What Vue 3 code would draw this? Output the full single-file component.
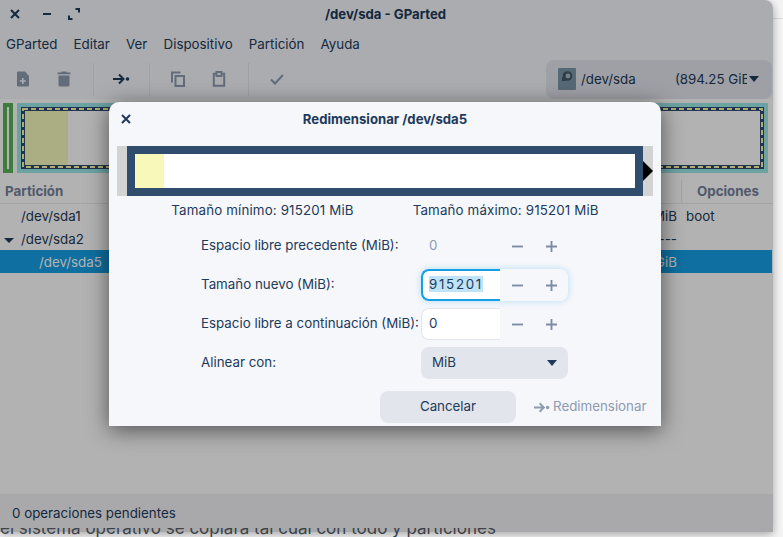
<template>
  <div class="page">
    <i class="page-rule"></i>

    <div class="window">
      <header class="titlebar">
        <div class="wm-buttons">
          <svg class="ic" viewBox="0 0 16 16"><path d="M4 4l8 8M12 4l-8 8" class="st-bold" /></svg>
          <svg class="ic" viewBox="0 0 16 16"><path d="M4 8h8" class="st-bold" /></svg>
          <svg class="ic" viewBox="0 0 16 16"><path d="M3 9.5V13h3.5M9.5 3H13v3.5" class="st-bold" /></svg>
        </div>
        <span class="title">/dev/sda - GParted</span>
      </header>

      <nav class="menubar">
        <span v-for="m in menus" :key="m">{{ m }}</span>
      </nav>

      <div class="toolbar">
        <div class="tools">
          <svg class="tool" viewBox="0 0 16 16"><path fill-rule="evenodd" class="fill-off" d="M3 0.5h7l4 4.5v9.5a1 1 0 0 1-1 1H3a1 1 0 0 1-1-1V1.5a1 1 0 0 1 1-1zM7 7v2.2H4.8v1.6H7V13h1.6v-2.2h2.2V9.200H8.600V7z" /></svg>
          <svg class="tool" viewBox="0 0 16 16"><path class="fill-off" d="M5.500 0.500h5l.5 1h3.500v1.800H1.500V1.500H5zM2.500 4.500h11v9.500a1.500 1.500 0 0 1-1.500 1.500H4a1.500 1.500 0 0 1-1.500-1.500z" /></svg>
          <i class="sep"></i>
          <svg class="tool arrow" viewBox="0 0 18 16"><path class="st-dark" d="M1 8h10.500M7 3.500L11.500 8 7 12.500" /><circle cx="15.500" cy="8" r="1.800" class="dot" /></svg>
          <i class="sep"></i>
          <svg class="tool" viewBox="0 0 16 16"><path class="st-off" d="M2 11.500V1.500h8.500M5.500 5h8.500v10H5.500z" /></svg>
          <svg class="tool" viewBox="0 0 16 16"><path class="st-off" d="M5.500 2.800H2.800v12h10.400v-12h-2.700M5.500 1h5V5h-5z" /></svg>
          <i class="sep"></i>
          <svg class="tool" viewBox="0 0 16 16"><path class="st-off" d="M2 8.500L6 12.500l8-8.500" /></svg>
        </div>
        <div class="device">
          <svg class="disk" viewBox="0 0 18 22"><rect width="18" height="22" rx="1" fill="#7b97a9" /><circle cx="9.500" cy="8" r="4.800" fill="#44586a" /><circle cx="10" cy="8" r="2.400" fill="#a9b6c0" /><path d="M4 9h4v4H4z" fill="#44586a" /></svg>
          <span class="dev-name">/dev/sda</span>
          <span class="dev-size"><span>(894.25 GiB)</span></span>
          <i class="caret"></i>
        </div>
      </div>

      <div class="map">
        <svg width="773" height="70" viewBox="0 0 773 70">
          <rect x="5" y="2" width="6" height="66" fill="none" stroke="#57b357" stroke-width="4" />
          <rect x="17" y="0" width="751" height="70" fill="#9ce8e8" />
          <rect x="21" y="4" width="743" height="62" fill="#2d4a70" />
          <rect x="25" y="8" width="735" height="54" fill="#fff" />
          <rect x="25" y="8" width="43" height="54" fill="#f5f8bb" />
          <rect x="23" y="6" width="739" height="58" fill="none" stroke="#fbf6a8" stroke-width="2" stroke-dasharray="5 3" />
        </svg>
      </div>

      <div class="table">
        <div class="row head">
          <span class="cell name">Partición</span>
          <span class="cell flags">Opciones</span>
        </div>
        <div v-for="p in partitions" :key="p.name" class="row" :class="{ selected: p.selected }">
          <span class="cell name" :style="{ paddingLeft: p.indent + 'px' }">
            <i v-if="p.open" class="tree-caret"></i>{{ p.name }}
          </span>
          <span class="cell used">{{ p.used }}</span>
          <span class="cell flags">{{ p.flags }}</span>
        </div>
      </div>

      <footer class="status">0 operaciones pendientes</footer>

      <div class="scrim"></div>
    </div>

    <p class="behind"><span>el sistema operativo se copiará tal cual con todo y particiones</span></p>

    <section class="dialog">
      <header class="dlg-title">
        <svg class="ic dlg-close" viewBox="0 0 16 16"><path d="M4 4l8 8M12 4l-8 8" class="st-bold" /></svg>
        <span class="title">Redimensionar /dev/sda5</span>
      </header>

      <div class="slider">
        <div class="frame">
          <div class="used-part"></div>
        </div>
        <i class="handle"></i>
      </div>

      <div class="limits">
        <span>Tamaño mínimo: 915201 MiB</span>
        <span>Tamaño máximo: 915201 MiB</span>
      </div>

      <div class="form">
        <label>Espacio libre precedente (MiB):</label>
        <div class="spin off">
          <span class="entry">0</span>
          <span class="spin-btn"><svg viewBox="0 0 12 12"><path d="M0 6h12" /></svg></span>
          <span class="spin-btn"><svg viewBox="0 0 12 12"><path d="M0 6h12M6 0v12" /></svg></span>
        </div>

        <label>Tamaño nuevo (MiB):</label>
        <div class="spin focus">
          <span class="entry"><mark>915201</mark></span>
          <span class="spin-btn"><svg viewBox="0 0 12 12"><path d="M0 6h12" /></svg></span>
          <span class="spin-btn"><svg viewBox="0 0 12 12"><path d="M0 6h12M6 0v12" /></svg></span>
        </div>

        <label>Espacio libre a continuación (MiB):</label>
        <div class="spin">
          <span class="entry">0</span>
          <span class="spin-btn"><svg viewBox="0 0 12 12"><path d="M0 6h12" /></svg></span>
          <span class="spin-btn"><svg viewBox="0 0 12 12"><path d="M0 6h12M6 0v12" /></svg></span>
        </div>

        <label>Alinear con:</label>
        <div class="combo"><span class="combo-text">MiB</span><i class="caret"></i></div>
      </div>

      <div class="actions">
        <button class="btn">Cancelar</button>
        <button class="btn-off">
          <svg viewBox="0 0 18 16"><path d="M1 8h10.500M7 3.500L11.500 8 7 12.500" /><circle cx="15.500" cy="8" r="1.800" /></svg>
          Redimensionar
        </button>
      </div>
    </section>
  </div>
</template>

<script setup>
const menus = ['GParted', 'Editar', 'Ver', 'Dispositivo', 'Partición', 'Ayuda']

const partitions = [
  { name: '/dev/sda1', indent: 21, used: 'MiB', flags: 'boot' },
  { name: '/dev/sda2', indent: 4, open: true, used: '----', flags: '' },
  { name: '/dev/sda5', indent: 39, used: 'GiB', flags: '', selected: true }
]
</script>

<style>
body {
  margin: 0;
}
</style>

<style scoped>
.page {
  position: relative;
  width: 783px;
  height: 537px;
  overflow: hidden;
  background: #f5f5f5;
  font-family: Inter, "Noto Sans", sans-serif;
  font-size: 13.33px;
  color: #1e3a5a;
}

.page-rule {
  position: absolute;
  left: 773px;
  right: 0;
  top: 18px;
  height: 1px;
  background: #dcdcdc;
}

.behind {
  position: absolute;
  left: 0;
  top: 528px;
  height: 9px;
  margin: 0;
  overflow: hidden;
  font-size: 17px;
  line-height: 20px;
  color: #3c4248;
  white-space: nowrap;
}

.behind span {
  display: block;
  margin-top: -10px;
}

.window {
  position: relative;
  width: 773px;
  height: 532px;
  display: flex;
  flex-direction: column;
  background: #fff;
  border-top-right-radius: 8px;
  box-shadow: 0 2px 10px rgba(0, 0, 0, 0.35);
  overflow: hidden;
}

.scrim {
  position: absolute;
  inset: 0;
  background: rgba(0, 0, 0, 0.3);
}

.titlebar {
  position: relative;
  height: 27px;
  padding: 0 2px 1px 0;
  display: flex;
  align-items: center;
  justify-content: center;
  background: #f5f7fb;
}

.wm-buttons {
  position: absolute;
  left: 7px;
  top: 6px;
  display: flex;
  gap: 16px;
}

.ic {
  width: 16px;
  height: 16px;
}

.wm-buttons .ic:last-child {
  margin-left: -5px;
}

.st-bold {
  fill: none;
  stroke: #1e3a5a;
  stroke-width: 2;
}

.title {
  font-size: 13.15px;
  font-weight: 700;
  color: #1e3a5a;
}

.menubar {
  height: 31px;
  padding-left: 6px;
  display: flex;
  align-items: center;
  gap: 16.2px;
  background: #f5f7fb;
}

.toolbar {
  height: 40px;
  display: flex;
  align-items: center;
  justify-content: space-between;
  padding-right: 1px;
  background: #f5f7fb;
}

.tools {
  display: flex;
  align-items: center;
  margin-left: 2.5px;
}

.tool {
  width: 16px;
  height: 16px;
  margin: 0 12.5px;
}

.tool.arrow {
  width: 18px;
  margin: 0 10.5px;
}

.fill-off {
  fill: #8e9bb0;
}

.st-off {
  fill: none;
  stroke: #8e9bb0;
  stroke-width: 2;
}

.st-dark {
  fill: none;
  stroke: #1e3a5a;
  stroke-width: 2;
}

.dot {
  fill: #1e3a5a;
}

.sep {
  width: 1px;
  height: 33px;
  margin: 0 8px;
  background: #e2e5ec;
}

.device {
  width: 226px;
  height: 39px;
  box-sizing: border-box;
  padding: 0 11px 0 12px;
  display: flex;
  align-items: center;
  border-radius: 8px;
  background: #e2e5ec;
}

.disk {
  width: 18px;
  height: 22px;
  margin-right: 5px;
}

.dev-name {
  width: 94px;
}

.dev-size {
  width: 72px;
  overflow: hidden;
  white-space: nowrap;
}

.caret {
  width: 0;
  height: 0;
  margin-left: 2px;
  border-left: 5.5px solid transparent;
  border-right: 5.5px solid transparent;
  border-top: 6px solid #1e3a5a;
}

.map {
  height: 70px;
  margin-top: 4px;
  background: #fff;
}

.map svg {
  display: block;
}

.table {
  flex: 1;
  margin-top: 7px;
  background: #fff;
}

.row {
  height: 23px;
  display: flex;
  align-items: center;
}

.row.head {
  height: 24px;
  box-sizing: border-box;
  padding-bottom: 2px;
  font-weight: 700;
  color: #75819a;
  border-bottom: 1px solid #ebebeb;
}

.row.head .flags {
  height: 24px;
  margin-bottom: -2px;
  display: flex;
  align-items: center;
  padding: 0 0 2px 15px;
  border-left: 1px solid #ebebeb;
}

.row.head .name {
  flex: 1;
  padding-left: 5px;
}

.row:not(.head) .name {
  flex: 1;
}

.row:not(.head) .flags {
  padding-left: 5px;
}

.row.selected {
  background: #159fe6;
  color: #fff;
  margin-right: 1px;
}

.row.selected .flags {
  width: 91px;
}

.used {
  margin-right: 4px;
}

.flags {
  width: 92px;
  box-sizing: border-box;
}

.tree-caret {
  display: inline-block;
  width: 0;
  height: 0;
  margin-right: 7px;
  vertical-align: 1px;
  border-left: 5px solid transparent;
  border-right: 5px solid transparent;
  border-top: 5px solid #1e3a5a;
}

.status {
  height: 38px;
  display: flex;
  align-items: center;
  padding-left: 12px;
  background: #f2f3f6;
}

.dialog {
  position: absolute;
  left: 109px;
  top: 102px;
  width: 552px;
  height: 324px;
  border-radius: 10px 10px 0 0;
  background: #f5f7fb;
  box-shadow: 0 4px 22px rgba(0, 0, 0, 0.55);
}

.dlg-title {
  position: relative;
  height: 34px;
  display: flex;
  align-items: center;
  justify-content: center;
}

.dlg-close {
  position: absolute;
  left: 9px;
  top: 9px;
}

.slider {
  position: relative;
  height: 50px;
  margin: 10px 8px 0;
  padding: 0 10px;
  background: #d3d3d3;
}

.frame {
  height: 100%;
  box-sizing: border-box;
  border: 8px solid #304d6d;
  background: #fff;
}

.used-part {
  width: 29px;
  height: 100%;
  background: #f8f8b8;
}

.handle {
  position: absolute;
  right: 0;
  top: 15px;
  width: 0;
  height: 0;
  border-top: 10px solid transparent;
  border-bottom: 10px solid transparent;
  border-left: 10px solid #000;
}

.limits {
  display: flex;
  justify-content: center;
  gap: 59px;
  margin-top: 6px;
  line-height: 16px;
  letter-spacing: 0.15px;
}

.form {
  display: grid;
  grid-template-columns: 220px 147px;
  grid-auto-rows: 32px;
  row-gap: 7px;
  align-items: center;
  margin: 12px 0 0 92px;
}

.form label {
  padding-bottom: 2px;
}

.spin {
  height: 32px;
  box-sizing: border-box;
  display: flex;
  align-items: center;
  border-radius: 8px;
}

.entry {
  width: 79px;
  height: 32px;
  box-sizing: border-box;
  display: flex;
  align-items: center;
  padding: 0 0 2px 7px;
  letter-spacing: 1.7px;
  background: #fff;
  border: 1px solid #e2e5ec;
  border-right: 0;
  border-radius: 8px 0 0 8px;
}

.off .entry {
  background: none;
  border-color: transparent;
  color: #8e9bb0;
}

.focus {
  box-shadow: 0 0 6px rgba(21, 159, 230, 0.3);
}

.focus .entry {
  border: 2px solid #159fe6;
  border-right: 0;
  padding-left: 6px;
}

mark {
  background: #bfe3f8;
  color: #1e3a5a;
}

.spin-btn {
  width: 34px;
  display: flex;
  justify-content: center;
}

.spin-btn svg {
  width: 11px;
  height: 11px;
  fill: none;
  stroke: #7d8ba3;
  stroke-width: 2;
}

.combo {
  height: 32px;
  box-sizing: border-box;
  padding: 0 11px;
  display: flex;
  align-items: center;
  justify-content: space-between;
  border-radius: 8px;
  background: #e2e5ec;
}

.combo-text {
  padding-bottom: 2px;
}

.actions {
  display: flex;
  align-items: center;
  margin: 12px 0 0 271px;
}

.btn {
  width: 136px;
  height: 32px;
  padding: 0 0 2px;
  border: 0;
  border-radius: 8px;
  background: #e2e5ec;
  color: #1e3a5a;
  font: inherit;
}

.btn-off {
  display: flex;
  align-items: center;
  gap: 3px;
  padding: 0 0 2px;
  margin-left: 17px;
  border: 0;
  background: none;
  color: #8e9bb0;
  font: inherit;
}

.btn-off svg {
  width: 17px;
  height: 15px;
  margin-top: 2px;
  fill: #8e9bb0;
}

.btn-off svg path {
  fill: none;
  stroke: #8e9bb0;
  stroke-width: 2;
}
</style>
